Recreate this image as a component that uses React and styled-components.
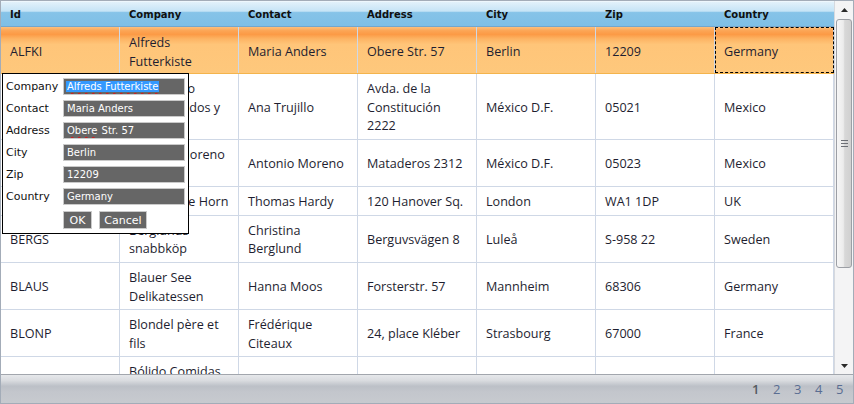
import { Fragment } from "react";
import styled, { createGlobalStyle } from "styled-components";

const GlobalStyle = createGlobalStyle`
    html, body {
        margin: 0;
        padding: 0;
        background: #fff;
    }
    * {
        box-sizing: border-box;
    }
`;

const columns = ["Id", "Company", "Contact", "Address", "City", "Zip", "Country"];

const customers = [
    ["ALFKI", "Alfreds Futterkiste", "Maria Anders", "Obere Str. 57", "Berlin", "12209", "Germany"],
    ["ANATR", "Ana Trujillo Emparedados y helados", "Ana Trujillo", "Avda. de la Constitución 2222", "México D.F.", "05021", "Mexico"],
    ["ANTON", "Antonio Moreno Taquería", "Antonio Moreno", "Mataderos 2312", "México D.F.", "05023", "Mexico"],
    ["AROUT", "Around the Horn", "Thomas Hardy", "120 Hanover Sq.", "London", "WA1 1DP", "UK"],
    ["BERGS", "Berglunds snabbköp", "Christina Berglund", "Berguvsvägen 8", "Luleå", "S-958 22", "Sweden"],
    ["BLAUS", "Blauer See Delikatessen", "Hanna Moos", "Forsterstr. 57", "Mannheim", "68306", "Germany"],
    ["BLONP", "Blondel père et fils", "Frédérique Citeaux", "24, place Kléber", "Strasbourg", "67000", "France"],
    ["BOLID", "Bólido Comidas preparadas", "Martín Sommer", "C/ Araquil, 67", "Madrid", "28023", "Spain"],
];

const Grid = styled.div`
    position: relative;
    width: 854px;
    height: 404px;
    border: 1px solid #a3acb8;
    display: flex;
    flex-direction: column;
    overflow: hidden;
    background: #fff;
`;

const Main = styled.div`
    flex: 1;
    display: flex;
    min-height: 0;
`;

const Table = styled.div`
    width: 833px;
    display: flex;
    flex-direction: column;
    min-height: 0;
`;

const HeaderRow = styled.div`
    display: grid;
    grid-template-columns: repeat(7, 119px);
    height: 26px;
    border-top: 1px solid #eef7fd;
    border-bottom: 1px solid #74a6cc;
    background: linear-gradient(to bottom, #e2f1fb 0%, #c6e4f6 38%, #86c3e8 44%, #7fbfe6 100%);
`;

const HeaderCell = styled.div`
    display: flex;
    align-items: center;
    padding-left: 9px;
    font-family: "DejaVu Sans", Verdana, sans-serif;
    font-weight: bold;
    font-size: 10px;
    color: #101010;
`;

const Rows = styled.div`
    flex: 1;
    overflow: hidden;
`;

const Row = styled.div`
    display: grid;
    grid-template-columns: repeat(7, 119px);
    border-bottom: 1px solid ${(p) => (p.$selected ? "#f4b44c" : "#cfd8e6")};
    background: ${(p) =>
        p.$selected
            ? "linear-gradient(to bottom, #fdc07e 0%, #fca555 8%, #fc9a45 16%, #fdb464 26%, #ffc579 38%, #fec87c 100%)"
            : "#fff"};
`;

const Cell = styled.div`
    padding: ${(p) => (p.$tall ? "7px 9px 2px 9px" : "6px 9px 3px 9px")};
    border-right: 1px solid #cfd8e6;
    font-family: "Open Sans", "Noto Sans", sans-serif;
    font-size: 12.6px;
    line-height: 18.6px;
    color: #1e1e30;
    display: flex;
    align-items: center;
    outline: ${(p) => (p.$focused ? "1px dashed #000" : "none")};
    outline-offset: -1px;
`;

const Scrollbar = styled.div`
    width: 19px;
    border-left: 1px solid #d6d9de;
    background: #f4f4f5;
    display: flex;
    flex-direction: column;
    align-items: center;
`;

const Arrow = styled.div`
    height: 17px;
    width: 100%;
    display: flex;
    align-items: center;
    justify-content: center;
`;

const Track = styled.div`
    flex: 1;
    width: 100%;
    padding: 1px 1px 86px 1px;
`;

const Thumb = styled.div`
    height: 249px;
    border: 1px solid #9c9fa5;
    border-radius: 3px;
    background: linear-gradient(to right, #f6f6f6 0%, #ececec 45%, #d8d8d8 55%, #d0d0d0 100%);
    display: flex;
    flex-direction: column;
    align-items: center;
    justify-content: center;
    gap: 2px;
`;

const Grip = styled.span`
    display: block;
    width: 7px;
    height: 1px;
    background: #6c6f75;
`;

const Pager = styled.div`
    height: 29px;
    border-top: 1px solid #a2a6ad;
    background: linear-gradient(to bottom, #e6e8eb 0%, #d9dbdf 20%, #bcc0c7 40%, #c3c6cc 60%, #c7cacf 100%);
    display: flex;
    align-items: center;
    justify-content: flex-end;
    gap: 14px;
    padding-right: 10px;
`;

const PageNum = styled.span`
    font-family: "Open Sans", "Noto Sans", sans-serif;
    font-size: 13px;
    font-weight: ${(p) => (p.$current ? 600 : 400)};
    color: ${(p) => (p.$current ? "#555a60" : "#5a6d92")};
    width: 7px;
    text-align: center;
`;

const Popup = styled.div`
    position: absolute;
    left: 1px;
    top: 72px;
    width: 187px;
    height: 161px;
    border: 1px solid #000;
    background: #fff;
    padding: 4px 0 0 3px;
    display: grid;
    grid-template-columns: 57px 122px;
    grid-auto-rows: 17px;
    row-gap: 5px;
`;

const Label = styled.div`
    font-family: "DejaVu Sans", Verdana, sans-serif;
    font-size: 11px;
    line-height: 17px;
    color: #111;
`;

const Field = styled.div`
    height: 17px;
    border: 1px solid #cacaca;
    background: #666;
    color: #fff;
    font-family: "DejaVu Sans", Verdana, sans-serif;
    font-size: 10px;
    line-height: 15px;
    padding-left: 2px;
    white-space: nowrap;
    overflow: hidden;
`;

const Text = styled.span`
    padding: 0 1px;
    background: ${(p) => (p.$selected ? "#3399ff" : "transparent")};
    text-decoration: ${(p) => (p.$misspelt ? "underline wavy #e01010" : "none")};
    text-decoration-thickness: 1px;
    text-underline-offset: 2px;
`;

const Buttons = styled.div`
    grid-column: 2;
    display: flex;
    gap: 7px;
    margin-top: 1px;
`;

const Button = styled.div`
    height: 18px;
    width: ${(p) => p.$w}px;
    border: 1px solid #cacaca;
    background: #666;
    color: #fff;
    font-family: "DejaVu Sans", Verdana, sans-serif;
    font-size: 11px;
    display: flex;
    align-items: center;
    justify-content: center;
`;

const editFields = [
    ["Company", "Alfreds Futterkiste", true, true],
    ["Contact", "Maria Anders", false, false],
    ["Address", "Obere Str. 57", false, true],
    ["City", "Berlin", false, false],
    ["Zip", "12209", false, false],
    ["Country", "Germany", false, false],
];

const Triangle = ({ down }) => (
    <svg width="7" height="4" viewBox="0 0 7 4">
        <polygon points={down ? "0,0 7,0 3.5,4" : "0,4 7,4 3.5,0"} fill="#2a2a2a" />
    </svg>
);

const renderField = (value, selected, misspelt) => {
    if (value === "Obere Str. 57") {
        return (
            <>
                <Text $misspelt>Obere</Text> Str. 57
            </>
        );
    }
    return (
        <Text $selected={selected} $misspelt={misspelt}>
            {value}
        </Text>
    );
};

const App = () => {
    return (
        <>
            <GlobalStyle />
            <Grid>
                <Main>
                    <Table>
                        <HeaderRow>
                            {columns.map((c) => (
                                <HeaderCell key={c}>{c}</HeaderCell>
                            ))}
                        </HeaderRow>
                        <Rows>
                            {customers.map((row, i) => (
                                <Row key={row[0]} $selected={i === 0}>
                                    {row.map((v, j) => (
                                        <Cell key={j} $tall={i === 0} $focused={i === 0 && j === 6}>
                                            {v}
                                        </Cell>
                                    ))}
                                </Row>
                            ))}
                        </Rows>
                    </Table>
                    <Scrollbar>
                        <Arrow>
                            <Triangle />
                        </Arrow>
                        <Track>
                            <Thumb>
                                <Grip />
                                <Grip />
                                <Grip />
                            </Thumb>
                        </Track>
                        <Arrow>
                            <Triangle down />
                        </Arrow>
                    </Scrollbar>
                </Main>
                <Pager>
                    {[1, 2, 3, 4, 5].map((n) => (
                        <PageNum key={n} $current={n === 1}>
                            {n}
                        </PageNum>
                    ))}
                </Pager>

                <Popup>
                    {editFields.map(([label, value, selected, misspelt]) => (
                        <Fragment key={label}>
                            <Label>{label}</Label>
                            <Field>{renderField(value, selected, misspelt)}</Field>
                        </Fragment>
                    ))}
                    <Buttons>
                        <Button $w={29}>OK</Button>
                        <Button $w={48}>Cancel</Button>
                    </Buttons>
                </Popup>
            </Grid>
        </>
    );
};

export default App;
